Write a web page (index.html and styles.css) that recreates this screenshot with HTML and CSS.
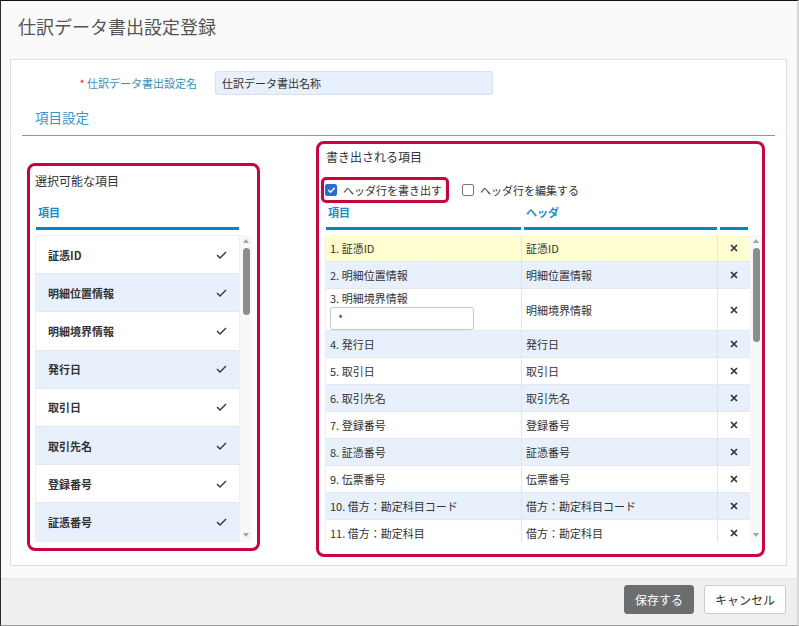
FILE: index.html
```html
<!DOCTYPE html>
<html lang="ja">
<head>
    <meta charset="UTF-8">
    <meta name="viewport" content="width=device-width, initial-scale=1.0">
    <title>仕訳データ書出設定登録</title>
    <link rel="stylesheet" href="styles.css">
</head>
<body>
    <div class="dialog">
        <div class="dialog-header">
            <h1>仕訳データ書出設定登録</h1>
        </div>

        <div class="dialog-body">
            <div class="form-row">
                <label class="form-label"><span class="required">*</span> 仕訳データ書出設定名</label>
                <div class="text-input name-input">仕訳データ書出名称</div>
            </div>

            <div class="section-title">項目設定</div>

            <div class="columns">
                <!-- 選択可能な項目 -->
                <div class="panel panel-left mark">
                    <div class="panel-title">選択可能な項目</div>
                    <div class="list-head"><span class="head-cell">項目</span></div>
                    <div class="scroll-box">
                        <ul class="pick-list">
                            <li>証憑ID <svg class="check" viewBox="0 0 11 8"><path d="M1 4l3 3 6-6"/></svg></li>
                            <li>明細位置情報 <svg class="check" viewBox="0 0 11 8"><path d="M1 4l3 3 6-6"/></svg></li>
                            <li>明細境界情報 <svg class="check" viewBox="0 0 11 8"><path d="M1 4l3 3 6-6"/></svg></li>
                            <li>発行日 <svg class="check" viewBox="0 0 11 8"><path d="M1 4l3 3 6-6"/></svg></li>
                            <li>取引日 <svg class="check" viewBox="0 0 11 8"><path d="M1 4l3 3 6-6"/></svg></li>
                            <li>取引先名 <svg class="check" viewBox="0 0 11 8"><path d="M1 4l3 3 6-6"/></svg></li>
                            <li>登録番号 <svg class="check" viewBox="0 0 11 8"><path d="M1 4l3 3 6-6"/></svg></li>
                            <li>証憑番号 <svg class="check" viewBox="0 0 11 8"><path d="M1 4l3 3 6-6"/></svg></li>
                        </ul>
                        <div class="scrollbar">
                            <span class="arrow-up"></span>
                            <span class="thumb thumb-left"></span>
                            <span class="arrow-down"></span>
                        </div>
                    </div>
                </div>

                <!-- 書き出される項目 -->
                <div class="panel panel-right mark">
                    <div class="panel-title">書き出される項目</div>
                    <div class="check-row">
                        <label class="check-label check-mark">
                            <span class="checkbox checked"><svg viewBox="0 0 10 8"><path d="M1.5 4l2.5 2.5 4.5-5"/></svg></span>
                            ヘッダ行を書き出す
                        </label>
                        <label class="check-label">
                            <span class="checkbox"></span>
                            ヘッダ行を編集する
                        </label>
                    </div>
                    <div class="table-head">
                        <span class="head-cell">項目</span>
                        <span class="head-cell">ヘッダ</span>
                        <span class="head-cell"></span>
                    </div>
                    <div class="scroll-box">
                        <div class="out-table">
                            <div class="out-row selected"><div>1. 証憑ID</div><div>証憑ID</div><div class="del"><svg viewBox="0 0 8 8"><path d="M1 1l6 6M7 1l-6 6"/></svg></div></div>
                            <div class="out-row"><div>2. 明細位置情報</div><div>明細位置情報</div><div class="del"><svg viewBox="0 0 8 8"><path d="M1 1l6 6M7 1l-6 6"/></svg></div></div>
                            <div class="out-row tall">
                                <div class="cell-stack">3. 明細境界情報<div class="text-input cell-input">*</div></div>
                                <div>明細境界情報</div>
                                <div class="del"><svg viewBox="0 0 8 8"><path d="M1 1l6 6M7 1l-6 6"/></svg></div>
                            </div>
                            <div class="out-row"><div>4. 発行日</div><div>発行日</div><div class="del"><svg viewBox="0 0 8 8"><path d="M1 1l6 6M7 1l-6 6"/></svg></div></div>
                            <div class="out-row"><div>5. 取引日</div><div>取引日</div><div class="del"><svg viewBox="0 0 8 8"><path d="M1 1l6 6M7 1l-6 6"/></svg></div></div>
                            <div class="out-row"><div>6. 取引先名</div><div>取引先名</div><div class="del"><svg viewBox="0 0 8 8"><path d="M1 1l6 6M7 1l-6 6"/></svg></div></div>
                            <div class="out-row"><div>7. 登録番号</div><div>登録番号</div><div class="del"><svg viewBox="0 0 8 8"><path d="M1 1l6 6M7 1l-6 6"/></svg></div></div>
                            <div class="out-row"><div>8. 証憑番号</div><div>証憑番号</div><div class="del"><svg viewBox="0 0 8 8"><path d="M1 1l6 6M7 1l-6 6"/></svg></div></div>
                            <div class="out-row"><div>9. 伝票番号</div><div>伝票番号</div><div class="del"><svg viewBox="0 0 8 8"><path d="M1 1l6 6M7 1l-6 6"/></svg></div></div>
                            <div class="out-row"><div>10. 借方：勘定科目コード</div><div>借方：勘定科目コード</div><div class="del"><svg viewBox="0 0 8 8"><path d="M1 1l6 6M7 1l-6 6"/></svg></div></div>
                            <div class="out-row"><div>11. 借方：勘定科目</div><div>借方：勘定科目</div><div class="del"><svg viewBox="0 0 8 8"><path d="M1 1l6 6M7 1l-6 6"/></svg></div></div>
                        </div>
                        <div class="scrollbar">
                            <span class="arrow-up"></span>
                            <span class="thumb thumb-right"></span>
                            <span class="arrow-down"></span>
                        </div>
                    </div>
                </div>
            </div>
        </div>

        <div class="dialog-footer">
            <button class="btn btn-save">保存する</button>
            <button class="btn btn-cancel">キャンセル</button>
        </div>
    </div>
</body>
</html>
```

FILE: styles.css
```css
* {
    margin: 0;
    padding: 0;
    box-sizing: border-box;
}
body {
    font-family: "Noto Sans CJK JP", "Noto Sans", sans-serif;
    color: #333;
    background: #fafafa;
}
.dialog {
    width: 799px;
    height: 626px;
    display: flex;
    flex-direction: column;
    background: #fafafa;
    border-top: 1px solid #111;
    border-left: 1px solid #2a2a2a;
    border-right: 2px solid #d8d8d8;
    border-bottom: 1px solid #9a9a9a;
}
.dialog-header {
    height: 58px;
    flex-shrink: 0;
    padding: 13px 0 0 17px;
}
.dialog-header h1 {
    font-size: 18px;
    line-height: 24px;
    font-weight: normal;
    color: #555;
}
.dialog-body {
    height: 507px;
    flex-shrink: 0;
    margin: 0 10px 0 9px;
    background: #fff;
    border: 1px solid #ddd;
}

/* 設定名 */
.form-row {
    display: flex;
    align-items: center;
    margin-top: 11px;
}
.form-label {
    width: 186px;
    margin-right: 18px;
    text-align: right;
    font-size: 11px;
    line-height: 14px;
    color: #3a8dbf;
}
.required {
    color: #e0303a;
}
.text-input {
    font-size: 11px;
    color: #333;
    background: #fff;
    border: 1px solid #c8c8c8;
    border-radius: 3px;
}
.name-input {
    width: 278px;
    height: 24px;
    line-height: 22px;
    padding-left: 6px;
    background: #e8f0fe;
    border-color: #d9e0ea;
}
.section-title {
    margin: 13px 11px 0 11px;
    padding: 0 0 9px 13px;
    font-size: 13.5px;
    line-height: 18px;
    color: #3f95c5;
    border-bottom: 1px solid #5ba6d0;
}

/* 2カラム */
.columns {
    display: flex;
    align-items: flex-start;
    padding-left: 16px;
}
.mark {
    border: 3px solid #c7063f;
    border-radius: 8px;
}
.panel-title {
    font-size: 12px;
    line-height: 16px;
    color: #333;
}
.head-cell {
    display: block;
    padding: 1px 0 7px 2px;
    font-size: 11px;
    line-height: 16px;
    font-weight: bold;
    color: #1b8bc6;
    border-bottom: 3px solid #0884c0;
}
.scroll-box {
    display: flex;
    height: 307px;
    margin-top: 5px;
}
.scrollbar {
    width: 12px;
    flex-shrink: 0;
    display: flex;
    flex-direction: column;
    align-items: center;
    background: #f8f8f8;
}
.arrow-up,
.arrow-down {
    display: block;
    width: 0;
    height: 0;
    border-left: 3.5px solid transparent;
    border-right: 3.5px solid transparent;
}
.arrow-up {
    margin: 4px 0 5px;
    border-bottom: 4px solid #a3a3a3;
}
.arrow-down {
    margin: auto 0 5px;
    border-top: 4px solid #a3a3a3;
}
.thumb {
    width: 7px;
    background: #8c8c8c;
    border-radius: 4px;
}
.thumb-left {
    height: 67px;
}
.thumb-right {
    height: 94px;
}

/* 左パネル */
.panel-left {
    width: 233px;
    height: 388px;
    margin-top: 27px;
    padding: 7px 5px 6px 5px;
}
.list-head {
    margin: 14px 13px 0 1px;
}
.pick-list {
    list-style: none;
    flex: 1;
    overflow: hidden;
    border: 1px solid #eceff3;
}
.pick-list li {
    height: 38.2px;
    display: flex;
    align-items: center;
    justify-content: space-between;
    padding: 0 12px;
    font-size: 11px;
    font-weight: bold;
    border-bottom: 1px solid #e3e8ef;
}
.pick-list li:nth-child(even) {
    background: #e8f0fb;
}
.check {
    width: 11px;
    height: 8px;
    fill: none;
    stroke: #333;
    stroke-width: 1.4;
}

/* 右パネル */
.panel-right {
    width: 449px;
    height: 416px;
    margin: 5px 0 0 56px;
    padding: 5px 0 12px 6px;
}
.panel-right .panel-title {
    padding-left: 1px;
}
.check-row {
    display: flex;
    align-items: center;
    margin-top: 12px;
    font-size: 11px;
}
.check-label {
    display: flex;
    align-items: center;
    gap: 6px;
    line-height: 14px;
}
.check-mark {
    height: 26px;
    margin: 0 13px 0 -4px;
    padding: 0 4px 0 1px;
    border: 3px solid #c7063f;
    border-radius: 5px;
}
.checkbox {
    width: 12px;
    height: 12px;
    display: flex;
    align-items: center;
    justify-content: center;
    background: #fff;
    border: 1px solid #767676;
    border-radius: 2px;
}
.checkbox.checked {
    background: #2a6bd3;
    border-color: #2a6bd3;
}
.checkbox svg {
    width: 9px;
    height: 8px;
    fill: none;
    stroke: #fff;
    stroke-width: 1.6;
}
.table-head {
    display: grid;
    grid-template-columns: 197px 196px 31px;
}
.table-head .head-cell {
    margin: 0 1px 0 2px;
}
.table-head .head-cell:first-child {
    margin-left: 1px;
}
.out-table {
    flex: 1;
    overflow: hidden;
    border-left: 1px solid #eceff3;
}
.out-row {
    display: grid;
    grid-template-columns: 196px 196px 31px;
    height: 27px;
    font-size: 11px;
    line-height: 14px;
    border-bottom: 1px solid #e3e8ef;
}
.out-row:nth-child(even) {
    background: #e8f0fb;
}
.out-row.selected {
    background: #fffdd2;
}
.out-row > div {
    display: flex;
    align-items: center;
    padding-left: 4px;
    border-right: 1px solid #e2e4e7;
}
.out-row > .del {
    justify-content: center;
    padding-left: 0;
    border-right: none;
}
.del svg {
    width: 8px;
    height: 8px;
    fill: none;
    stroke: #333;
    stroke-width: 1.7;
}
.out-row.tall {
    height: 42px;
}
.out-row > .cell-stack {
    flex-direction: column;
    align-items: flex-start;
    padding-top: 2px;
}
.cell-input {
    width: 144px;
    height: 23px;
    margin-top: 2px;
    padding-left: 7px;
    line-height: 21px;
}

/* フッター */
.dialog-footer {
    height: 47px;
    flex-shrink: 0;
    margin-top: 12px;
    display: flex;
    justify-content: flex-end;
    gap: 10px;
    padding: 6px 11px 0 0;
    background: #efefef;
    border-top: 1px solid #e4e4e4;
}
.btn {
    height: 29px;
    padding: 0 10px;
    font-family: inherit;
    font-size: 12px;
    border-radius: 3px;
    cursor: pointer;
}
.btn-save {
    background: #6b6e70;
    color: #fff;
    border: 1px solid #6b6e70;
}
.btn-cancel {
    background: #fff;
    color: #333;
    border: 1px solid #ccc;
}
```
